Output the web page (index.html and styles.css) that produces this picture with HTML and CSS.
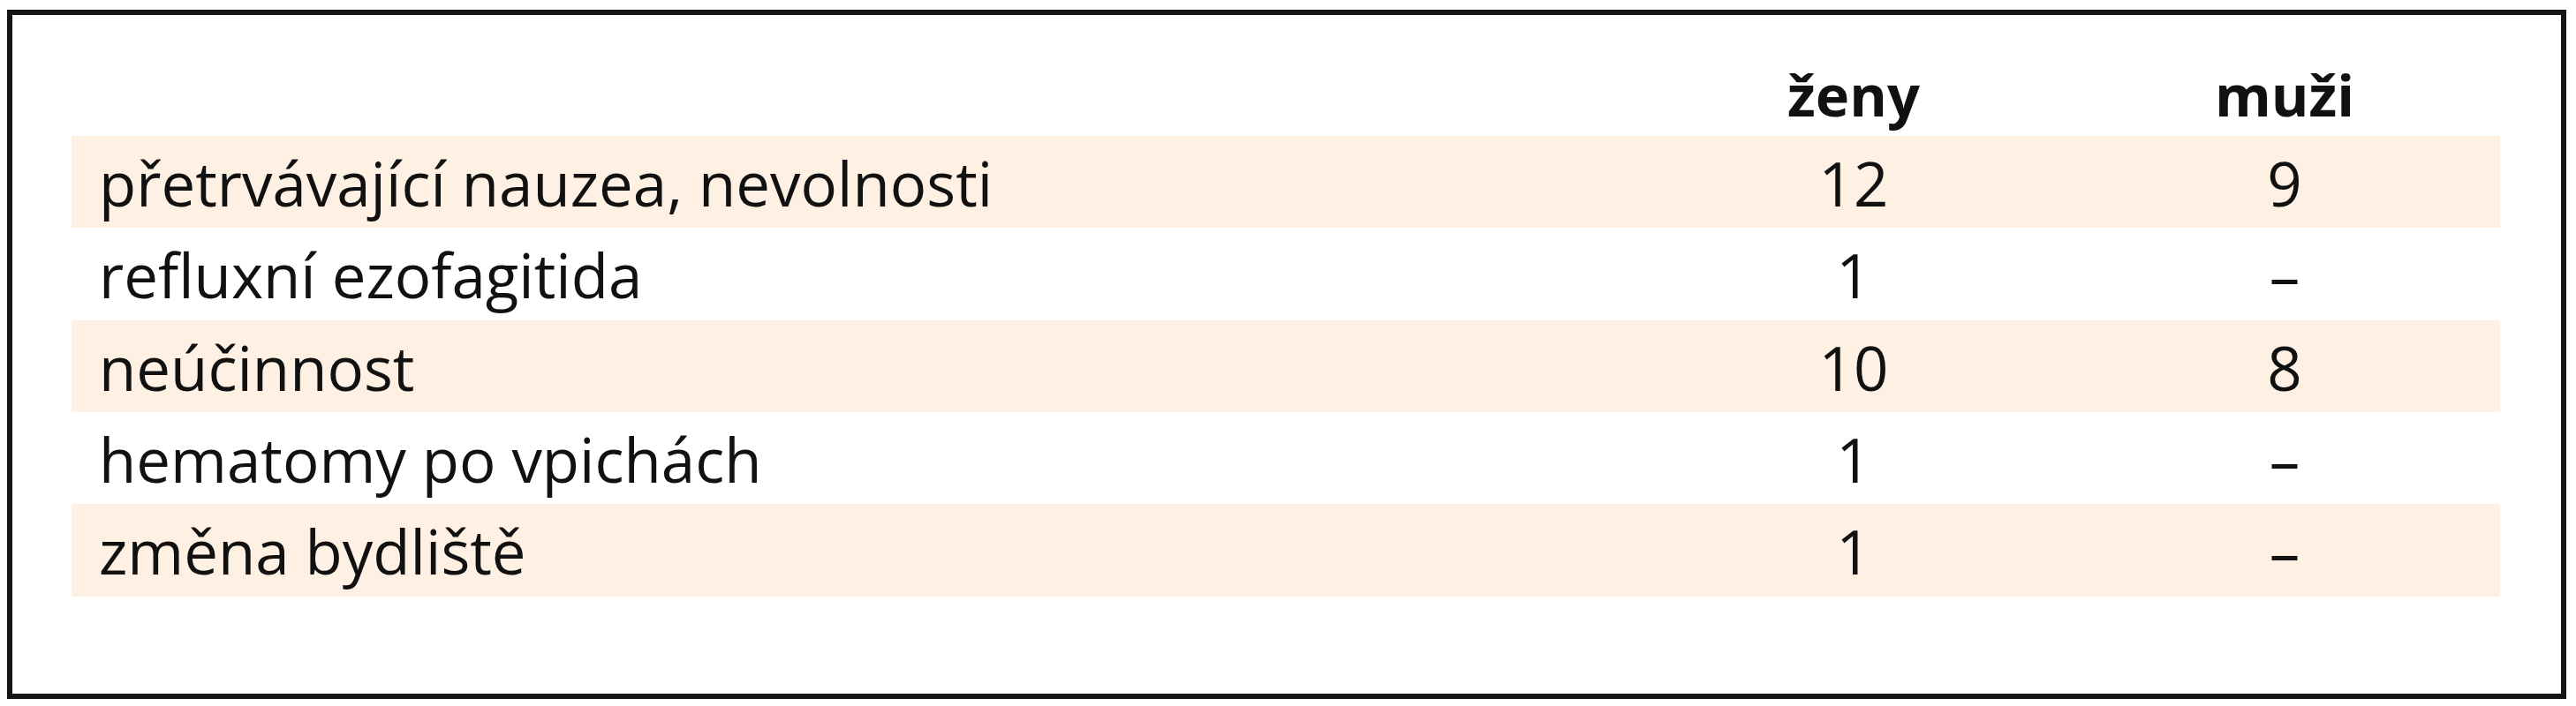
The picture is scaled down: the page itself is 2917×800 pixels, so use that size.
FILE: index.html
```html
<!DOCTYPE html>
<html lang="cs">
<head>
<meta charset="utf-8">
<title>Tabulka</title>
<link rel="stylesheet" href="styles.css">
</head>
<body>
<div class="frame">
  <div class="table">
    <div class="row head">
      <div class="cell label"></div>
      <div class="cell num">ženy</div>
      <div class="cell num">muži</div>
    </div>
    <div class="row shade">
      <div class="cell label">přetrvávající nauzea, nevolnosti</div>
      <div class="cell num">12</div>
      <div class="cell num">9</div>
    </div>
    <div class="row">
      <div class="cell label">refluxní ezofagitida</div>
      <div class="cell num">1</div>
      <div class="cell num">–</div>
    </div>
    <div class="row shade">
      <div class="cell label">neúčinnost</div>
      <div class="cell num">10</div>
      <div class="cell num">8</div>
    </div>
    <div class="row">
      <div class="cell label">hematomy po vpichách</div>
      <div class="cell num">1</div>
      <div class="cell num">–</div>
    </div>
    <div class="row shade">
      <div class="cell label">změna bydliště</div>
      <div class="cell num">1</div>
      <div class="cell num">–</div>
    </div>
  </div>
</div>
</body>
</html>
```
FILE: styles.css
```css
html, body {
  margin: 0;
  padding: 0;
  background: #ffffff;
}

body {
  font-family: "Open Sans", "Noto Sans", "Liberation Sans", sans-serif;
  color: #111111;
}

.frame {
  box-sizing: border-box;
  width: 2898px;
  height: 781px;
  margin: 11px 0 0 8px;
  border: 6px solid #151515;
  padding: 41px 69px 0 67px;
}

.table {
  display: flex;
  flex-direction: column;
}

.row {
  box-sizing: border-box;
  display: grid;
  grid-template-columns: 1774px 488px 488px;
  font-size: 69px;
  line-height: 101.33px;
  height: 104.33px;
  padding-top: 3px;
  white-space: nowrap;
}

.row.head {
  font-size: 65px;
  font-weight: 700;
  line-height: 96px;
  height: 96px;
  padding-top: 1px;
}

.row.shade {
  background: #fef1e3;
}

.cell.label {
  padding-left: 31px;
}

.cell.num {
  text-align: center;
}
```
